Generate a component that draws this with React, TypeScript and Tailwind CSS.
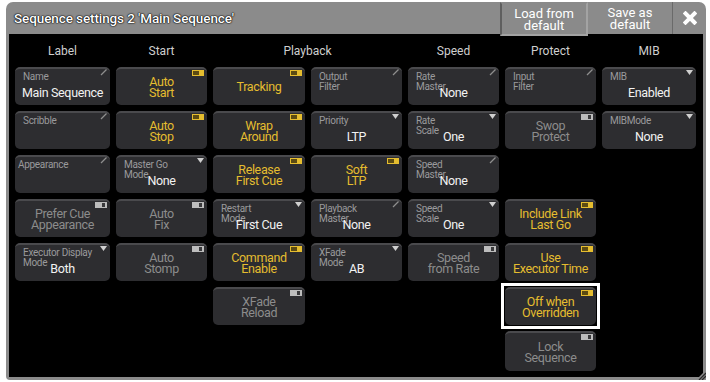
import React from "react";

type Cell =
  | null
  | { k: "t"; t: string[]; on: boolean; sel?: boolean; tall?: boolean }
  | { k: "f"; l: string[]; v?: string; i: "e" | "d"; lx?: boolean };

const E = (l: string[], v?: string): Cell => ({ k: "f", l, v, i: "e" });
const D = (l: string[], v?: string): Cell => ({ k: "f", l, v, i: "d" });
const On = (...t: string[]): Cell => ({ k: "t", t, on: true });
const Off = (...t: string[]): Cell => ({ k: "t", t, on: false });

const rows: Cell[][] = [
  [E(["Name"], "Main Sequence"), On("Auto", "Start"), On("Tracking"), E(["Output", "Filter"]), E(["Rate", "Master"], "None"), E(["Input", "Filter"]), D(["MIB"], "Enabled")],
  [E(["Scribble"]), On("Auto", "Stop"), On("Wrap", "Around"), D(["Priority"], "LTP"), D(["Rate", "Scale"], "One"), Off("Swop", "Protect"), D(["MIBMode"], "None")],
  [{ k: "f", l: ["Appearance"], i: "e", lx: true }, D(["Master Go", "Mode"], "None"), On("Release", "First Cue"), On("Soft", "LTP"), E(["Speed", "Master"], "None"), null, null],
  [Off("Prefer Cue", "Appearance"), Off("Auto", "Fix"), D(["Restart", "Mode"], "First Cue"), E(["Playback", "Master"], "None"), D(["Speed", "Scale"], "One"), On("Include Link", "Last Go"), null],
  [D(["Executor Display", "Mode"], "Both"), Off("Auto", "Stomp"), On("Command", "Enable"), D(["XFade", "Mode"], "AB"), Off("Speed", "from Rate"), On("Use", "Executor Time"), null],
  [null, null, Off("XFade", "Reload"), null, null, { k: "t", t: ["Off when", "Overridden"], on: true, sel: true }, null],
  [null, null, null, null, null, { k: "t", t: ["Lock", "Sequence"], on: false, tall: true }, null],
];

function Ind({ on }: { on: boolean }) {
  return on ? (
    <div className="absolute right-[3px] top-[1px] flex h-[6px] w-[12px] border border-[#e5bd2f] bg-[#e5bd2f]">
      <div className="w-[6px] bg-[#5c4b12]" />
    </div>
  ) : (
    <div className="absolute right-[3px] top-[1px] flex h-[6px] w-[12px] border border-[#bdbdbd] bg-[#bdbdbd]">
      <div className="w-[6px]" />
      <div className="w-[3px] bg-[#3a3a3c]" />
    </div>
  );
}

function Btn({ c }: { c: Cell }) {
  if (!c) return <div />;
  const base =
    "relative h-[38px] rounded-[5px] border-t-2 border-[#4a4a4d] bg-[#2d2d30]";
  if (c.k === "t") {
    return (
      <div className={`${base} ${c.tall ? "h-[40px]" : ""}`}>
        {c.sel && (
          <div className="pointer-events-none absolute -bottom-[4px] -left-[4px] -right-[4px] -top-[6px] border-[3px] border-white" />
        )}
        <Ind on={c.on} />
        <div
          className={`flex h-full flex-col items-center justify-center text-[12.5px] leading-[11.5px] tracking-[-0.35px] ${
            c.on ? "text-[#e5bd2f]" : "text-[#8c8c8c]"
          }`}
        >
          {c.t.map((s, i) => (
            <div key={i}>{s}</div>
          ))}
        </div>
      </div>
    );
  }
  return (
    <div className={base}>
      <div
        className={`${c.lx ? "pl-[3px]" : "pl-[8px]"} pt-[3px] text-[10px] leading-[10px] tracking-[-0.3px] text-[#9a9a9c]`}
      >
        {c.l.map((s, i) => (
          <div key={i}>{s}</div>
        ))}
      </div>
      {c.v && (
        <div className="absolute inset-x-0 bottom-[5px] text-center text-[12.5px] leading-[15px] tracking-[-0.35px] text-[#f2f2f2]">
          {c.v}
        </div>
      )}
      {c.i === "e" ? (
        <svg className="absolute right-[2px] top-[0px]" width="8" height="7" viewBox="0 0 8 7">
          <line x1="1" y1="6" x2="6.5" y2="0.5" stroke="#8e8e8e" strokeWidth="1.2" />
        </svg>
      ) : (
        <svg className="absolute right-[3px] top-[1px]" width="7" height="5" viewBox="0 0 7 5">
          <polygon points="0,0 7,0 3.5,5" fill="#d0d0d0" />
        </svg>
      )}
    </div>
  );
}

export default function App() {
  const cols = "grid grid-cols-[95px_91px_92px_91px_91px_91px_94px] gap-x-[6px]";
  return (
    <div
      className="h-[382px] w-[710px] bg-white pl-[6px] pt-[2px]"
      style={{ fontFamily: "Roboto, 'Noto Sans', sans-serif" }}
    >
      <div className="relative flex h-[378px] w-[700px] flex-col rounded-b-[4px] rounded-t-[7px] bg-[#8b8b8b]">
        <div className="flex h-[32px] items-stretch">
          <div className="flex flex-1 items-center pl-[8px] text-[13.5px] font-medium tracking-[-0.1px] text-white [text-shadow:0_0_2px_#000,0_0_1px_#000,0_0_1px_#000]">
            Sequence settings 2 'Main Sequence'
          </div>
          <div className="z-10 -mb-[2px] flex w-[88px] flex-col items-center justify-center border-2 border-l-[#5f5f5f] border-[#a3a3a3] border-t-transparent bg-[#8a8a8a] pt-[2px] text-[13px] leading-[12px] text-white">
            <div>Load from</div>
            <div>default</div>
          </div>
          <div className="flex w-[85px] flex-col items-center justify-center border-r border-[#6a6a6a] pt-[2px] text-[13px] leading-[12px] text-white">
            <div>Save as</div>
            <div>default</div>
          </div>
          <div className="flex w-[33px] items-center justify-center">
            <svg width="14" height="14" viewBox="0 0 14 14">
              <path d="M2.5 2.5 L11.5 11.5 M11.5 2.5 L2.5 11.5" stroke="#fff" strokeWidth="4" strokeLinecap="square" />
            </svg>
          </div>
        </div>
        <div className="mx-[3px] mb-[3px] flex-1 bg-black pl-[6px] pt-0">
          <div className={`${cols} h-[33px] items-center text-center text-[12px] text-[#cfcfcf]`}>
            <div>Label</div>
            <div>Start</div>
            <div className="col-span-2">Playback</div>
            <div>Speed</div>
            <div>Protect</div>
            <div>MIB</div>
          </div>
          <div className={`${cols} gap-y-[6px]`}>
            {rows.flatMap((r, ri) => r.map((c, ci) => <Btn key={`${ri}-${ci}`} c={c} />))}
          </div>
        </div>
        <svg className="absolute bottom-0 right-0" width="10" height="10" viewBox="0 0 10 10">
          <polygon points="10,0 10,10 0,10" fill="#8b8b8b" />
          <path d="M3 10 L10 3 M6 10 L10 6" stroke="#2a2a2a" strokeWidth="1.3" />
        </svg>
      </div>
    </div>
  );
}
